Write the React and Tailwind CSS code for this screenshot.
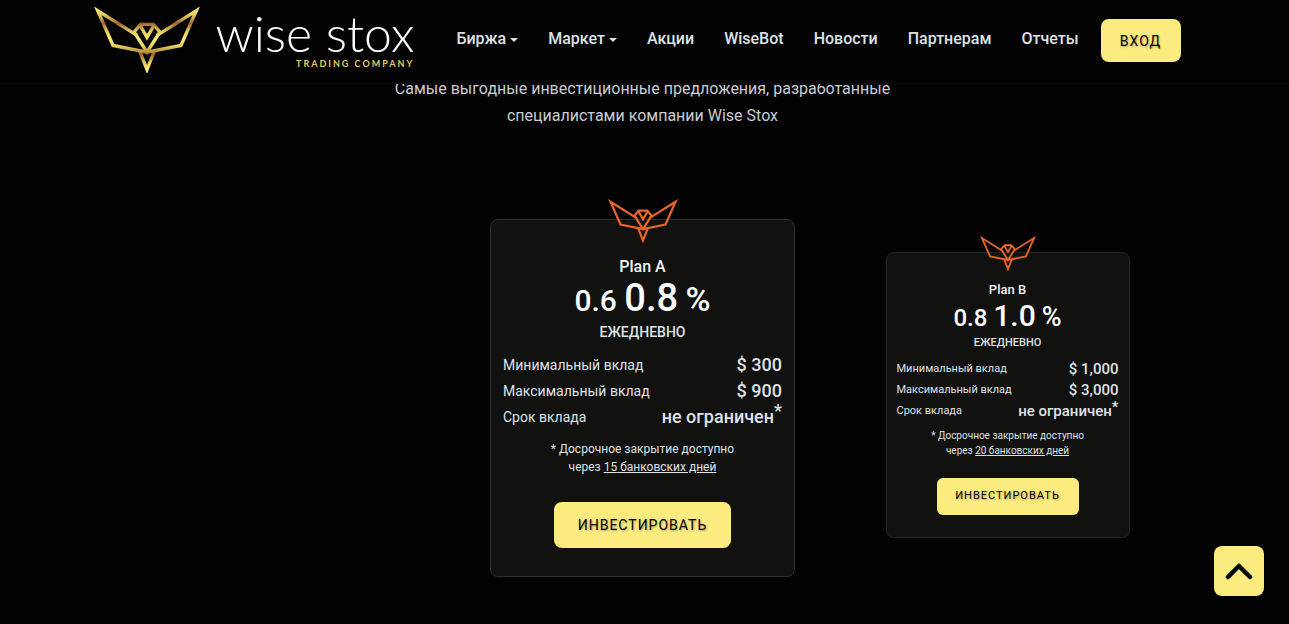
import { useId } from "react";

const NAV = [
  { label: "Биржа", menu: true },
  { label: "Маркет", menu: true },
  { label: "Акции" },
  { label: "WiseBot" },
  { label: "Новости" },
  { label: "Партнерам" },
  { label: "Отчеты" },
];

const PLANS = [
  { name: "Plan A", from: "0.6", to: "0.8", min: "$ 300", max: "$ 900", days: "15" },
  { name: "Plan B", from: "0.8", to: "1.0", min: "$ 1,000", max: "$ 3,000", days: "20" },
];

const LARGE = {
  card: "w-[305px] pt-5",
  icon: "w-[70px] h-11",
  body: "h-[358px] px-3 pt-[37px] border-[#2f2f2e]",
  name: "text-base leading-5",
  rate: "text-[30px] leading-[42px]",
  rateTo: "text-[38px]",
  percent: "text-[34px]",
  daily: "text-sm leading-5",
  rows: "mt-2.5",
  row: "h-[26px]",
  label: "text-sm",
  value: "text-lg",
  star: "-top-1.5",
  note: "mt-2.5 text-xs leading-[18px]",
  button: "mt-[26px] h-[46px] w-[177px] text-sm tracking-[1px] rounded-lg",
};

const SMALL = {
  card: "w-[244px] pt-4 pb-0.5",
  icon: "w-14 h-[35px]",
  body: "h-[286px] px-2.5 pt-7 border-[#242423]",
  name: "text-[13px] leading-[18px]",
  rate: "text-2xl leading-[34px]",
  rateTo: "text-[30px]",
  percent: "text-[27px]",
  daily: "text-[11px] leading-4",
  rows: "mt-2",
  row: "h-[21px]",
  label: "text-[11px]",
  value: "text-[15px]",
  star: "-top-1",
  note: "mt-1.5 text-[10px] leading-[15px]",
  button: "mt-5 h-[37px] w-[142px] text-[11px] tracking-[1px] rounded-md",
};

function Bird({ className, gold }) {
  const id = useId();
  return (
    <svg
      viewBox="30 24 312 194"
      className={className}
      fill="none"
      stroke={gold ? `url(#${id})` : "#e8662a"}
      strokeWidth="10"
      strokeMiterlimit="8"
      aria-hidden="true"
    >
      {gold && (
        <defs>
          <linearGradient id={id} gradientUnits="userSpaceOnUse" x1="186" y1="118" x2="186" y2="72" spreadMethod="reflect">
            <stop offset="0" stopColor="#fbec7c" />
            <stop offset="0.45" stopColor="#e8d060" />
            <stop offset="0.85" stopColor="#b08a3e" />
            <stop offset="1" stopColor="#b4592a" />
          </linearGradient>
        </defs>
      )}
      <path d="M158 108 L41 35 L86 137 L186 157 L286 137 L331 35 L214 108" />
      <path d="M167 75 H205 L224 97 L186 157 L148 97 Z" />
      <path d="M166 79 L186 113 L206 79" />
      <path d="M165 155 L186 208 L207 155" />
    </svg>
  );
}

function Row({ s, label, value, star }) {
  return (
    <div className={`flex items-center justify-between ${s.row}`}>
      <dt className={s.label}>{label}</dt>
      <dd className={`font-medium ${s.value}`}>
        {value}
        {star && <sup className={`text-[1em] ${s.star}`}>*</sup>}
      </dd>
    </div>
  );
}

function PlanCard({ plan, s }) {
  return (
    <article className={`relative ${s.card}`}>
      <Bird className={`absolute top-0 left-1/2 -translate-x-1/2 ${s.icon}`} />
      <div className={`flex flex-col rounded-lg border bg-[#111110] text-[#dee2e6] ${s.body}`}>
        <h2 className={`text-center font-medium text-[#f2f2f4] ${s.name}`}>{plan.name}</h2>
        <p className={`text-center font-medium text-white ${s.rate}`}>
          {plan.from} <span className={s.rateTo}>{plan.to}</span> <span className={s.percent}>%</span>
        </p>
        <p className={`text-center font-medium ${s.daily}`}>ЕЖЕДНЕВНО</p>
        <dl className={s.rows}>
          <Row s={s} label="Минимальный вклад" value={plan.min} />
          <Row s={s} label="Максимальный вклад" value={plan.max} />
          <Row s={s} label="Срок вклада" value="не ограничен" star />
        </dl>
        <p className={`text-center ${s.note}`}>
          * Досрочное закрытие доступно
          <br />
          через <span className="underline">{plan.days} банковских дней</span>
        </p>
        <button type="button" className={`self-center bg-[#fceb7f] text-black [text-shadow:1px_1px_2px_rgba(0,0,0,0.3)] ${s.button}`}>
          ИНВЕСТИРОВАТЬ
        </button>
      </div>
    </article>
  );
}

export default function App() {
  return (
    <div className="min-h-screen bg-[#020202] pr-1 font-['Roboto',sans-serif] text-[#dee2e6]">
      <header className="fixed inset-x-0 top-0 z-10 h-[84px] border-b border-[#0b0b0b] bg-[#020202] pr-1">
        <div className="mx-auto flex h-full max-w-[1098px] items-start">
          <a href="#home" className="flex shrink-0 pt-[7px]">
            <Bird gold className="h-[66px] w-[106px]" />
            <span className="ml-4 flex flex-col items-end">
              <span className="font-['Lato',sans-serif] text-[50px] leading-[52px] font-light text-white">wise stox</span>
              <span className="font-['Lato',sans-serif] text-[9px] leading-[10px] font-bold tracking-[2px] text-[#e5c95a]">TRADING COMPANY</span>
            </span>
          </a>
          <nav className="ml-auto flex items-center gap-[30px] pt-[27px] pr-[22px] text-base leading-6 font-medium whitespace-nowrap">
            {NAV.map((item) => (
              <a key={item.label} href="#menu" className="flex items-center gap-1">
                {item.label}
                {item.menu && (
                  <svg viewBox="0 0 8 4" className="mt-0.5 h-1 w-2 fill-current" aria-hidden="true">
                    <path d="M0 0h8L4 4z" />
                  </svg>
                )}
              </a>
            ))}
          </nav>
          <button type="button" className="mt-[19px] mr-[11px] h-[43px] w-20 rounded-lg bg-[#fceb7f] text-sm tracking-[1px] text-black [text-shadow:1px_1px_2px_rgba(0,0,0,0.3)]">
            ВХОД
          </button>
        </div>
      </header>

      <main className="pt-[75px]">
        <p className="mx-auto max-w-[500px] text-center text-base leading-[27px] text-[#c9ccd1]">
          Самые выгодные инвестиционные предложения, разработанные специалистами компании Wise Stox
        </p>
        <section className="mx-auto mt-[70px] grid max-w-[1095px] grid-cols-3 items-center justify-items-center">
          <div className="col-start-2">
            <PlanCard plan={PLANS[0]} s={LARGE} />
          </div>
          <PlanCard plan={PLANS[1]} s={SMALL} />
        </section>
      </main>

      <button
        type="button"
        aria-label="Наверх"
        className="fixed right-[25px] bottom-7 flex size-[50px] items-center justify-center rounded-lg bg-[#fceb7f] text-black"
      >
        <svg viewBox="0 0 28 18" className="h-[18px] w-7" fill="none" stroke="currentColor" strokeWidth="4.5" strokeLinecap="round" strokeLinejoin="round" aria-hidden="true">
          <path d="M3 15 L14 4 L25 15" />
        </svg>
      </button>
    </div>
  );
}
